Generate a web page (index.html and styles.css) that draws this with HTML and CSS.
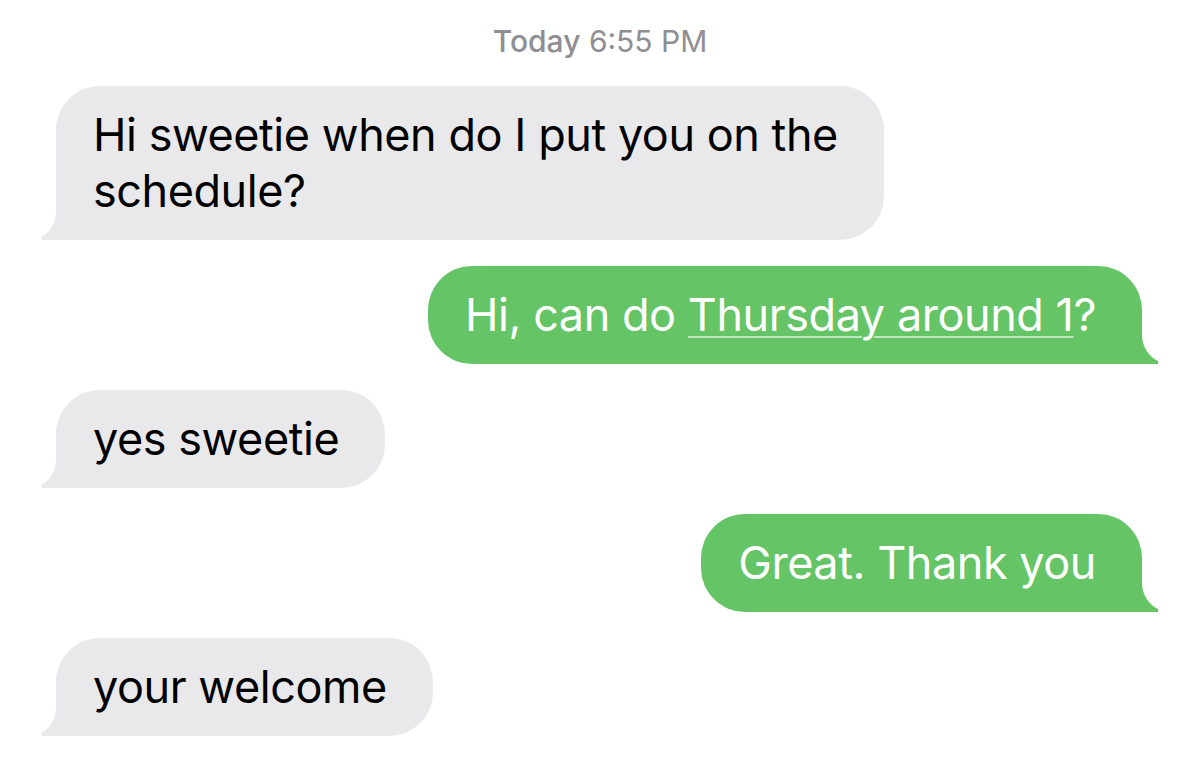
FILE: index.html
```html
<!DOCTYPE html>
<html lang="en">
<head>
<meta charset="utf-8">
<title>Messages</title>
<link rel="stylesheet" href="styles.css">
</head>
<body>
<main class="thread">
  <div class="stamp"><span class="stamp-day">Today</span> 6:55 PM</div>
  <div class="messages">
    <div class="bubble in">Hi sweetie when do I put you on the<br>schedule?</div>
    <div class="bubble out">Hi, can do <span class="link">Thursday around 1</span>?</div>
    <div class="bubble in">yes sweetie</div>
    <div class="bubble out">Great. Thank you</div>
    <div class="bubble in">your welcome</div>
  </div>
</main>
</body>
</html>
```

FILE: styles.css
```css
html, body {
  margin: 0;
  padding: 0;
  background: #ffffff;
}

.thread {
  width: 1200px;
  height: 760px;
  box-sizing: border-box;
  padding: 23px 58px 0 56px;
  display: flex;
  flex-direction: column;
  font-family: Inter, "Noto Sans", sans-serif;
  overflow: hidden;
}

.stamp {
  align-self: center;
  height: 36px;
  line-height: 36px;
  font-size: 30px;
  color: #8e8e93;
  margin-bottom: 27px;
  margin-left: 2px;
}

.stamp-day {
  font-weight: 500;
}

.messages {
  display: flex;
  flex-direction: column;
  gap: 26px;
}

.bubble {
  position: relative;
  max-width: 800px;
  padding: 21px 46px 21px 37px;
  border-radius: 44px;
  font-size: 45px;
  line-height: 56px;
  letter-spacing: -0.45px;
}

.in {
  align-self: flex-start;
  background: #e9e9eb;
  color: #000000;
  border-bottom-left-radius: 0;
}

.in::before {
  content: "";
  position: absolute;
  left: -14px;
  bottom: 0;
  width: 24px;
  height: 32px;
  background: #e9e9eb;
}

.in::after {
  content: "";
  position: absolute;
  left: -52px;
  bottom: 0;
  width: 52px;
  height: 32px;
  background: #ffffff;
  border-bottom-right-radius: 26px 29px;
}

.out {
  align-self: flex-end;
  background: #65c466;
  color: #ffffff;
  border-bottom-right-radius: 0;
}

.out-tight {
  padding-right: 38px;
}

.out::before {
  content: "";
  position: absolute;
  right: -16px;
  bottom: 0;
  width: 26px;
  height: 32px;
  background: #65c466;
}

.out::after {
  content: "";
  position: absolute;
  right: -52px;
  bottom: 0;
  width: 52px;
  height: 32px;
  background: #ffffff;
  border-bottom-left-radius: 28px 29px;
}

.link {
  text-decoration: underline;
  text-decoration-color: rgba(255, 255, 255, 0.6);
  text-decoration-thickness: 2px;
  text-underline-offset: 5px;
}
```
